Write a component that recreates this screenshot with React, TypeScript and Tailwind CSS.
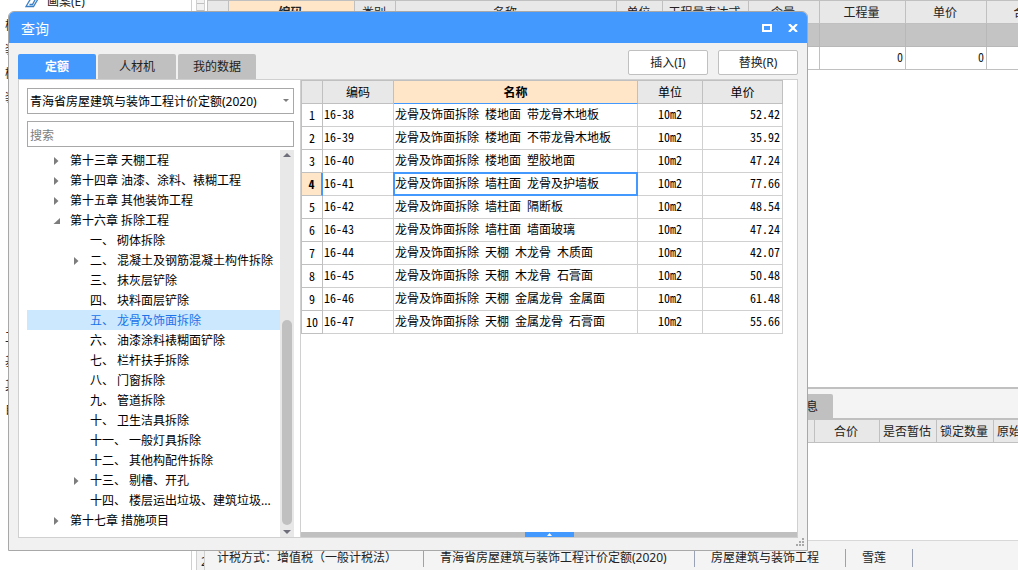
import clsx from 'clsx';

const uiFont = 'font-["Noto_Sans","Noto_Sans_CJK_SC",sans-serif]';
const gridFont = 'font-["Noto_Sans_Mono_CJK_SC","Liberation_Mono","Noto_Sans_CJK_SC",monospace]';

type TreeItem = { label: string; level: 1 | 2; state?: 'open' | 'closed'; selected?: boolean };

const treeItems: TreeItem[] = [
  { label: '第十三章 天棚工程', level: 1, state: 'closed' },
  { label: '第十四章 油漆、涂料、裱糊工程', level: 1, state: 'closed' },
  { label: '第十五章 其他装饰工程', level: 1, state: 'closed' },
  { label: '第十六章 拆除工程', level: 1, state: 'open' },
  { label: '一、 砌体拆除', level: 2 },
  { label: '二、 混凝土及钢筋混凝土构件拆除', level: 2, state: 'closed' },
  { label: '三、 抹灰层铲除', level: 2 },
  { label: '四、 块料面层铲除', level: 2 },
  { label: '五、 龙骨及饰面拆除', level: 2, selected: true },
  { label: '六、 油漆涂料裱糊面铲除', level: 2 },
  { label: '七、 栏杆扶手拆除', level: 2 },
  { label: '八、 门窗拆除', level: 2 },
  { label: '九、 管道拆除', level: 2 },
  { label: '十、 卫生洁具拆除', level: 2 },
  { label: '十一、 一般灯具拆除', level: 2 },
  { label: '十二、 其他构配件拆除', level: 2 },
  { label: '十三、 剔槽、开孔', level: 2, state: 'closed' },
  { label: '十四、 楼层运出垃圾、建筑垃圾...', level: 2 },
  { label: '第十七章 措施项目', level: 1, state: 'closed' },
];

const quotaRows = [
  { code: '16-38', name: '龙骨及饰面拆除 楼地面 带龙骨木地板', price: '52.42' },
  { code: '16-39', name: '龙骨及饰面拆除 楼地面 不带龙骨木地板', price: '35.92' },
  { code: '16-40', name: '龙骨及饰面拆除 楼地面 塑胶地面', price: '47.24' },
  { code: '16-41', name: '龙骨及饰面拆除 墙柱面 龙骨及护墙板', price: '77.66' },
  { code: '16-42', name: '龙骨及饰面拆除 墙柱面 隔断板', price: '48.54' },
  { code: '16-43', name: '龙骨及饰面拆除 墙柱面 墙面玻璃', price: '47.24' },
  { code: '16-44', name: '龙骨及饰面拆除 天棚 木龙骨 木质面', price: '42.07' },
  { code: '16-45', name: '龙骨及饰面拆除 天棚 木龙骨 石膏面', price: '50.48' },
  { code: '16-46', name: '龙骨及饰面拆除 天棚 金属龙骨 金属面', price: '61.48' },
  { code: '16-47', name: '龙骨及饰面拆除 天棚 金属龙骨 石膏面', price: '55.66' },
];

const tabs = ['定额', '人材机', '我的数据'];

function TreeArrow({ state }: { state?: 'open' | 'closed' }) {
  if (!state) return null;
  return (
    <svg width="7" height="8" viewBox="0 0 7 8" className="shrink-0" aria-hidden="true">
      {state === 'open' ? (
        <path d="M7 1v6H0.500z" fill="#7d7d7d" />
      ) : (
        <path d="M1 0v8l4.500-4z" fill="#7d7d7d" />
      )}
    </svg>
  );
}

function ChapterTree() {
  return (
    <div className="mt-[3px] flex min-h-0 flex-1">
      <ul className="min-w-0 flex-1 overflow-hidden">
        {treeItems.map((item) => (
          <li key={item.label}>
            <button
              type="button"
              className={clsx(
                'flex h-5 w-full items-center pt-0.5 text-left whitespace-nowrap',
                item.level === 1 ? 'pl-[26px]' : 'pl-[46px]',
                item.selected ? 'bg-[#cce8ff] text-[#1a73e8]' : 'text-black',
              )}
            >
              <span className="flex w-[17px] shrink-0 items-center">
                <TreeArrow state={item.state} />
              </span>
              {item.label}
            </button>
          </li>
        ))}
      </ul>
      <div className="flex w-3.5 flex-col items-center bg-[#e8e8e8]">
        <svg width="8" height="4" viewBox="0 0 8 4" className="mt-[3px]" aria-hidden="true">
          <path d="M0 4L4 0l4 4z" fill="#6f6f7b" />
        </svg>
        <div className="mt-auto h-[205px] w-2.5 rounded-full bg-[#c0c0c0]" />
        <svg width="8" height="4" viewBox="0 0 8 4" className="mt-[5px] mb-[3px]" aria-hidden="true">
          <path d="M0 0L4 4l4-4z" fill="#6f6f7b" />
        </svg>
      </div>
    </div>
  );
}

function QuotaTable() {
  const head = 'h-6 border-t border-r border-b border-[#c0c0c0] font-normal';
  const cell = 'relative h-[23px] border-r border-b border-[#d0d0d0] pb-0.5';
  return (
    <table className={clsx('w-[482px] table-fixed border-separate border-spacing-0 border-l border-[#c0c0c0] leading-4 text-black', gridFont)}>
      <colgroup>
        <col className="w-[21px]" />
        <col className="w-[71px]" />
        <col className="w-[244px]" />
        <col className="w-[65px]" />
        <col className="w-20" />
      </colgroup>
      <thead>
        <tr className="bg-[#e8e8e8]">
          <th className={head} aria-label="序号" />
          <th className={head}>编码</th>
          <th className="h-6 border-t border-r border-b border-t-[#c0c0c0] border-r-[#c0c0c0] border-b-[#4499ff] bg-[#ffe6c9] font-bold">
            名称
          </th>
          <th className={head}>单位</th>
          <th className={head}>单价</th>
        </tr>
      </thead>
      <tbody>
        {quotaRows.map((row, index) => {
          const active = index === 3;
          return (
            <tr key={row.code}>
              <th
                className={clsx(
                  'h-[23px] border-b border-b-[#c0c0c0] text-center',
                  active
                    ? 'border-r-2 border-r-[#4499ff] bg-[#ffe6c9] font-bold'
                    : 'border-r border-r-[#c0c0c0] font-normal',
                )}
              >
                {index + 1}
              </th>
              <td className={clsx(cell, 'pl-px')}>{row.code}</td>
              <td className={clsx(cell, 'pl-px whitespace-nowrap')}>
                {row.name}
                {active && <span className="absolute -inset-px border-2 border-[#4499ff]" />}
              </td>
              <td className={clsx(cell, 'text-center')}>10m2</td>
              <td className={clsx(cell, 'pr-0.5 text-right')}>{row.price}</td>
            </tr>
          );
        })}
      </tbody>
    </table>
  );
}

function ResizeGrip() {
  return (
    <svg width="8" height="8" viewBox="0 0 8 8" className="absolute right-[3px] bottom-1" aria-hidden="true">
      <path d="M6 0h2v2H6zM3 3h2v2H3zM6 3h2v2H6zM0 6h2v2H0zM3 6h2v2H3zM6 6h2v2H6z" fill="#a8a8a8" />
    </svg>
  );
}

function QueryDialog() {
  return (
    <section
      role="dialog"
      aria-label="查询"
      className="absolute top-[11px] right-[210px] bottom-[19px] left-2 flex flex-col rounded-t-md border border-[#a8a8a8] bg-[#f1f1f1]"
    >
      <header className="flex h-[31px] shrink-0 items-center rounded-t-[5px] bg-[#4499ff] pr-[9px] pl-3 text-white">
        <h1 className="flex-1 pt-0.5 text-sm">查询</h1>
        <button type="button" aria-label="最大化" className="mr-4">
          <svg width="10" height="8" viewBox="0 0 10 8" aria-hidden="true">
            <path d="M1 1h8v6H1z" fill="none" stroke="white" strokeWidth="2" />
          </svg>
        </button>
        <button type="button" aria-label="关闭">
          <svg width="10" height="8" viewBox="0 0 10 8" aria-hidden="true">
            <path d="M1 0L9 8M9 0L1 8" stroke="white" strokeWidth="2.200" />
          </svg>
        </button>
      </header>

      <div className="flex h-9 shrink-0 items-end px-[9px]">
        <div role="tablist" className="flex gap-0.5">
          {tabs.map((tab, index) => (
            <button
              key={tab}
              type="button"
              role="tab"
              aria-selected={index === 0}
              className={clsx(
                'h-[25px] w-[78px] rounded-t-xs',
                index === 0 ? 'bg-[#4499ff] font-bold text-white' : 'bg-[#c0c0c0] text-[#222]',
              )}
            >
              {tab}
            </button>
          ))}
        </div>
        <div className="mb-1 ml-auto flex gap-2.5">
          {['插入(I)', '替换(R)'].map((label) => (
            <button key={label} type="button" className="h-[25px] w-20 rounded-xs border border-[#c0c0c0] bg-white text-[#222]">
              {label}
            </button>
          ))}
        </div>
      </div>

      <div className="mx-[9px] mb-3 flex min-h-0 flex-1 border border-[#d0d0d0] bg-white">
        <div className="flex w-[282px] shrink-0 flex-col border-r border-[#d0d0d0] pt-2 pr-1.5 pl-2">
          <div className="relative">
            <select
              aria-label="定额库"
              className="block h-[26px] w-full appearance-none border border-[#a8a8a8] bg-white pt-0.5 pl-0.5 text-black"
            >
              <option>青海省房屋建筑与装饰工程计价定额(2020)</option>
            </select>
            <svg width="6" height="3" viewBox="0 0 6 3" className="pointer-events-none absolute top-[11px] right-[5px]" aria-hidden="true">
              <path d="M0 0h6L3 3z" fill="#7d7d7d" />
            </svg>
          </div>
          <input
            type="text"
            aria-label="搜索"
            placeholder="搜索"
            className="mt-[7px] h-[26px] w-full shrink-0 border border-[#a8a8a8] px-0.5 pt-0.5 placeholder:text-[#7d7d7d]"
          />
          <ChapterTree />
        </div>
        <div className="flex min-w-0 flex-1 flex-col">
          <QuotaTable />
          <div className="mt-auto flex h-[5px] justify-center bg-[#c0c0c0]">
            <button type="button" aria-label="展开" className="flex w-[49px] items-center justify-center bg-[#4499ff]">
              <svg width="5" height="3" viewBox="0 0 5 3" aria-hidden="true">
                <path d="M0 3L2.500 0L5 3z" fill="white" />
              </svg>
            </button>
          </div>
        </div>
      </div>
      <ResizeGrip />
    </section>
  );
}

function Sidebar() {
  return (
    <aside className="flex w-48 shrink-0 flex-col border-r border-[#d0d0d0] pl-[5px] text-[#222]">
      <div className="flex h-3.5 items-end pl-5">
        <svg width="14" height="8" viewBox="0 0 14 8" className="mb-1.5 shrink-0" aria-hidden="true">
          <path d="M5.500 -1L1 6.500h7.500L13 -1M4.500 4.500h3L10.500 -1" fill="none" stroke="#3b7fc4" strokeWidth="1.300" />
        </svg>
        <span className="ml-2 leading-6">画案(E)</span>
      </div>
      {['楼', '装', '棚', '装'].map((label, index) => (
        <div key={index} className="h-6 leading-6">{label}</div>
      ))}
      <div className="mt-[216px]">
        {['工', '基', '其', '自'].map((label) => (
          <div key={label} className="h-6 leading-6">{label}</div>
        ))}
      </div>
    </aside>
  );
}

const workColumns = [
  { title: '', width: 'w-[21px]' },
  { title: '编码', width: 'w-[126px]' },
  { title: '类别', width: 'w-[41px]' },
  { title: '名称', width: 'w-[221px]' },
  { title: '单位', width: 'w-[46px]' },
  { title: '工程量表达式', width: 'w-[86px]' },
  { title: '含量', width: 'w-[71px]' },
  { title: '工程量', width: 'w-[86px]' },
  { title: '单价', width: 'w-[81px]' },
  { title: '合价', width: 'w-20' },
];

function WorkArea() {
  const head = 'h-[23px] border-r border-b border-[#c0c0c0] font-normal';
  return (
    <main className="flex min-w-0 flex-1">
      <div className="ml-1 flex w-[9px] shrink-0 flex-col overflow-hidden border-x border-[#d0d0d0] bg-[#f1f1f1] pt-[3px] text-[#222]">
        <div className="h-2 shrink-0 border-y border-[#c0c0c0]" />
        <span className="mt-auto pl-1">2</span>
      </div>
      <div className="flex min-w-0 flex-1 flex-col">
        <div className="ml-0.5 flex flex-1 flex-col overflow-hidden">
          <table className={clsx('w-[860px] table-fixed border-separate border-spacing-0 border-t border-l border-[#c0c0c0] leading-4 text-[#222]', gridFont)}>
            <colgroup>
              {workColumns.map((column) => <col key={column.title} className={column.width} />)}
            </colgroup>
            <thead>
              <tr>
                {workColumns.map(({ title }) => (
                  <th
                    key={title}
                    className={clsx(
                      'h-[23px] border-r border-b border-[#c0c0c0] pr-0.5',
                      title === '编码' ? 'bg-[#ffe6c9] font-bold' : 'bg-[#e8e8e8] font-normal',
                    )}
                  >
                    {title}
                  </th>
                ))}
              </tr>
            </thead>
            <tbody>
              <tr>
                {workColumns.map(({ title }) => (
                  <td key={title} className="h-[23px] border-r border-b border-[#b8b8b8] bg-[#c4c4c4]" />
                ))}
              </tr>
              <tr>
                {workColumns.map(({ title }) => (
                  <td key={title} className="h-[23px] border-r border-b border-[#c0c0c0] pr-0.5 pb-0.5 text-right">
                    {(title === '工程量' || title === '单价') && '0'}
                  </td>
                ))}
              </tr>
            </tbody>
          </table>

          <div className="mt-auto h-[153px] shrink-0 border-t-2 border-[#c0c0c0] bg-white">
            <div className="flex h-[31px] items-end border-b-2 border-[#c0c0c0] bg-[#f4f4f4]">
              <button type="button" className="ml-[520px] h-6 w-[106px] rounded-t-xs bg-[#c0c0c0] pt-0.5 pr-[15px] text-right text-[#222]">
                说明信息
              </button>
            </div>
            <table className={clsx('w-[867px] table-fixed border-separate border-spacing-0 leading-4 text-[#222]', gridFont)}>
              <thead>
                <tr className="bg-[#e8e8e8]">
                  <th className={clsx(head, 'w-[608px]')} />
                  <th className={clsx(head, 'w-[65px] pr-0.5')}>合价</th>
                  <th className={clsx(head, 'w-[57px] pr-0.5')}>是否暂估</th>
                  <th className={clsx(head, 'w-[57px] pr-0.5')}>锁定数量</th>
                  <th className={clsx(head, 'w-20 pl-[3px] text-left')}>原始含量</th>
                </tr>
              </thead>
            </table>
          </div>
        </div>
        <footer className="flex h-[30px] shrink-0 items-center border-t border-[#d8d8d8] bg-[#f4f4f4] pt-1 pl-3 leading-[18px] whitespace-nowrap text-[#222]">
          <span className="w-[206px]">计税方式：增值税（一般计税法）</span>
          <span className="h-[18px] w-[271px] border-l border-[#9aa3b5] pl-4">青海省房屋建筑与装饰工程计价定额(2020)</span>
          <span className="h-[18px] w-[151px] border-l border-[#9aa3b5] pl-4">房屋建筑与装饰工程</span>
          <span className="h-[18px] w-[67px] border-l border-[#9aa3b5] pl-4">雪莲</span>
          <span className="h-[18px] border-l border-[#9aa3b5]" />
        </footer>
      </div>
    </main>
  );
}

export default function App() {
  return (
    <div className={clsx('relative flex h-screen overflow-hidden bg-white text-xs', uiFont)}>
      <Sidebar />
      <WorkArea />
      <QueryDialog />
    </div>
  );
}
